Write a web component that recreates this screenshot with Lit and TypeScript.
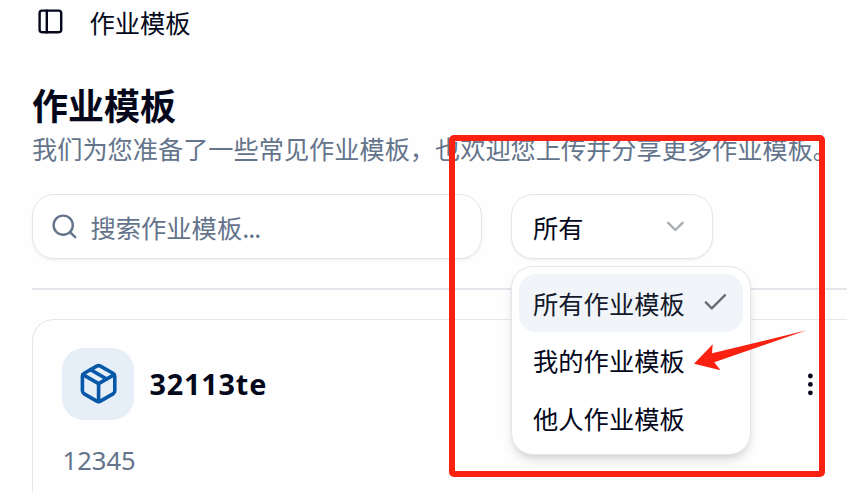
import { LitElement, html, css } from "lit";
import { customElement } from "lit/decorators.js";

@customElement("app-root")
export class AppRoot extends LitElement {
  static styles = css`
    :host {
      display: block;
      position: relative;
      box-sizing: border-box;
      width: 100%;
      height: 100vh;
      overflow: hidden;
      background: #fefefe;
      color: #04081a;
      font: 25.3px/36px "Noto Sans CJK SC", sans-serif;
    }
    * { box-sizing: border-box; }
    svg {
      display: block;
      flex: none;
      width: 28.8px;
      height: 28.8px;
      fill: none;
      stroke: currentColor;
      stroke-width: 2;
      stroke-linecap: round;
      stroke-linejoin: round;
    }
    .top { display: flex; align-items: center; gap: 25px; height: 43px; padding-left: 35.6px; }
    .main { padding-left: 32px; white-space: nowrap; }
    .title { margin: 37px 0 0; height: 48px; font-size: 36px; line-height: 48px; font-weight: 700; }
    .lead { height: 36px; margin-top: 2px; font-size: 25.2px; color: #64748b; }
    .filters { display: flex; gap: 29px; margin-top: 28px; }
    .field {
      display: flex;
      align-items: center;
      height: 65px;
      border: 1px solid #e2e6ea;
      border-radius: 22px;
      background: #fff;
      box-shadow: 0 2px 3px rgba(0, 0, 0, 0.05);
    }
    .search { width: 450px; gap: 12px; padding-left: 16.6px; color: #64748b; }
    .dots { letter-spacing: -1px; }
    .picker { position: relative; width: 202px; padding: 0 22px 0 21px; justify-content: space-between; }
    .chevron { color: #a8adb4; }
    .menu {
      position: absolute;
      z-index: 2;
      left: -1px;
      top: 71px;
      width: 240px;
      height: 189px;
      padding: 7px;
      border: 1px solid #e2e6ea;
      border-radius: 22px;
      background: #fff;
      box-shadow: 0 7px 11px -2px rgba(0, 0, 0, 0.13), 0 3px 7px -3px rgba(0, 0, 0, 0.1);
    }
    .option {
      display: flex;
      align-items: center;
      justify-content: space-between;
      height: 57.6px;
      padding: 0 13px 0 14px;
      border-radius: 17px;
    }
    .option.on { background: #f1f5f9; color: #14192b; }
    .option svg { color: #686d78; }
    .rule { height: 2px; margin-top: 29px; background: #e3e6ea; }
    .card {
      height: 230px;
      margin-top: 29px;
      padding: 28px 22.6px 0 29px;
      border: 1px solid #e3e7eb;
      border-right: 0;
      border-radius: 22px 0 0 0;
    }
    .head { display: flex; align-items: center; }
    .badge {
      display: flex;
      align-items: center;
      padding-left: 14.8px;
      width: 72px;
      height: 72px;
      border-radius: 22px;
      background: #e6eef8;
      color: #0759a8;
    }
    .badge svg { width: 43.2px; height: 43.2px; }
    .name { flex: 1; margin-left: 15.5px; font: 700 28.8px/40px "Noto Sans", sans-serif; letter-spacing: 0.8px; }
    .note { margin-top: 23px; padding-left: 0.5px; font: 25.6px/36px "Noto Sans", sans-serif; color: #64748b; }
    .frame {
      position: absolute;
      z-index: 3;
      left: 449px;
      top: 135px;
      width: 376px;
      height: 342px;
      border: 6px solid #fa2111;
      border-radius: 5px;
    }
    .arrow {
      position: absolute;
      z-index: 4;
      left: 694px;
      top: 330px;
      width: 113px;
      height: 41px;
      fill: #fa2111;
      stroke: none;
    }
  `;

  render() {
    return html`
      <header class="top">
        <svg viewBox="0 0 24 24"><rect x="3" y="3" width="18" height="18" rx="2" /><path d="M9 3v18" /></svg>
        <span>作业模板</span>
      </header>
      <main class="main">
        <h1 class="title">作业模板</h1>
        <div class="lead">我们为您准备了一些常见作业模板，也欢迎您上传并分享更多作业模板。</div>
        <div class="filters">
          <div class="field search">
            <svg viewBox="0 0 24 24"><circle cx="11" cy="11" r="8" /><path d="m21 21-4.3-4.3" /></svg>
            <span>搜索作业模板<span class="dots">...</span></span>
          </div>
          <div class="field picker">
            <span>所有</span>
            <svg class="chevron" viewBox="0 0 24 24"><path d="m6 9 6 6 6-6" /></svg>
            <div class="menu">
              <div class="option on">
                <span>所有作业模板</span>
                <svg viewBox="0 0 24 24"><path d="M20 6 9 17l-5-5" /></svg>
              </div>
              <div class="option">我的作业模板</div>
              <div class="option">他人作业模板</div>
            </div>
          </div>
        </div>
        <div class="rule"></div>
        <section class="card">
          <div class="head">
            <div class="badge">
              <svg viewBox="0 0 24 24">
                <path d="M11 21.73a2 2 0 0 0 2 0l7-4A2 2 0 0 0 21 16V8a2 2 0 0 0-1-1.73l-7-4a2 2 0 0 0-2 0l-7 4A2 2 0 0 0 3 8v8a2 2 0 0 0 1 1.73z" />
                <path d="M12 22V12" /><path d="m3.3 7 8.7 5 8.7-5" /><path d="m7.5 4.27 9 5.15" />
              </svg>
            </div>
            <div class="name">32113te</div>
            <svg viewBox="0 0 24 24"><circle cx="12" cy="5" r="1" /><circle cx="12" cy="12" r="1" /><circle cx="12" cy="19" r="1" /></svg>
          </div>
          <div class="note">12345</div>
        </section>
      </main>
      <div class="frame"></div>
      <svg class="arrow" viewBox="0 0 113 41"><path d="M0 33.7 18.7 14.3 18 23.3 112.7.3 20.3 32.3 26.5 40.3z" /></svg>
    `;
  }
}
